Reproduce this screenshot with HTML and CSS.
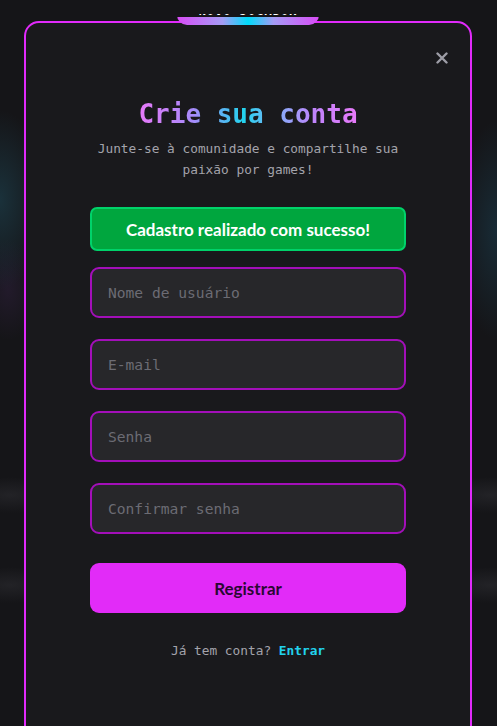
FILE: index.html
```html
<!DOCTYPE html>
<html lang="pt-BR">
<head>
<meta charset="utf-8">
<title>Crie sua conta</title>
<link rel="stylesheet" href="styles.css">
</head>
<body>
  <div class="backdrop">
    <section class="modal">
      <div class="badge"><span>NOVO JOGADOR</span></div>
      <button class="close" type="button" aria-label="Fechar">
        <svg viewBox="0 0 12 12" width="12" height="12"><path d="M1.5 1.5 L10.5 10.5 M10.5 1.5 L1.5 10.5" stroke="#9d9da6" stroke-width="2.4" stroke-linecap="round"/></svg>
      </button>
      <h1 class="title">Crie sua conta</h1>
      <p class="subtitle">Junte-se à comunidade e compartilhe sua paixão por games!</p>
      <form class="form">
        <div class="alert">Cadastro realizado com sucesso!</div>
        <div class="fields">
          <input class="field" type="text" placeholder="Nome de usuário">
          <input class="field" type="email" placeholder="E-mail">
          <input class="field" type="password" placeholder="Senha">
          <input class="field" type="password" placeholder="Confirmar senha">
        </div>
        <button class="submit" type="button">Registrar</button>
      </form>
      <p class="footer">Já tem conta? <a class="link" href="#">Entrar</a></p>
    </section>
  </div>
</body>
</html>
```
FILE: styles.css
```css
* { box-sizing: border-box; }

html, body {
  margin: 0;
  padding: 0;
  height: 726px;
  overflow: hidden;
}

body {
  background: #161619;
  font-family: "DejaVu Sans Mono", monospace;
}

.backdrop {
  height: 726px;
  padding: 21px 25px 0 24px;
  background:
    radial-gradient(ellipse 45px 90px at 0px 200px, rgba(35, 95, 115, 0.38), transparent),
    radial-gradient(ellipse 30px 50px at 8px 290px, rgba(80, 45, 110, 0.22), transparent),
    radial-gradient(ellipse 40px 110px at 497px 230px, rgba(30, 85, 110, 0.35), transparent),
    radial-gradient(ellipse 50px 18px at 10px 495px, rgba(60, 60, 66, 0.35), transparent),
    radial-gradient(ellipse 50px 18px at 490px 495px, rgba(60, 60, 66, 0.35), transparent),
    radial-gradient(ellipse 50px 18px at 10px 585px, rgba(60, 60, 66, 0.35), transparent),
    radial-gradient(ellipse 50px 18px at 490px 585px, rgba(60, 60, 66, 0.35), transparent),
    #151518;
}

.modal {
  position: relative;
  width: 448px;
  height: 760px;
  background: #19191c;
  border: 2px solid #e12afb;
  border-radius: 15px;
  padding: 76px 64px 0 64px;
  text-align: center;
}

.badge {
  position: absolute;
  top: -9px;
  left: 151px;
  width: 142px;
  height: 11px;
  overflow: hidden;
  border-radius: 0 0 10px 10px;
  background: linear-gradient(90deg, #d84cf6 0%, #a59cf5 32%, #00dcfb 50%, #a59cf5 68%, #d84cf6 100%) bottom / 100% 8.5px no-repeat;
  display: flex;
  justify-content: center;
}

.badge span {
  color: #ffffff;
  font-family: "DejaVu Sans Mono", monospace;
  font-weight: 700;
  font-size: 12px;
  line-height: 12px;
  letter-spacing: 1px;
  margin-top: -9px;
}

.close {
  position: absolute;
  top: 29px;
  right: 22px;
  width: 12px;
  height: 12px;
  padding: 0;
  border: 0;
  background: none;
  display: flex;
}

.title {
  margin: 0;
  font-family: "DejaVu Sans Mono", monospace;
  font-weight: 700;
  font-size: 26px;
  line-height: 30px;
  background: linear-gradient(90deg, #e879f9 0%, #a78bfa 25%, #22d3ee 48%, #7fb2f8 62%, #c084fc 80%, #e879f9 100%);
  -webkit-background-clip: text;
  background-clip: text;
  color: transparent;
  display: inline-block;
}

.subtitle {
  margin: 9px 0 0;
  font-size: 12.8px;
  line-height: 21px;
  color: #a3a3ab;
  padding: 0 4px;
}

.form {
  margin-top: 27px;
  display: flex;
  flex-direction: column;
}

.alert {
  height: 44px;
  border: 2px solid #00d26a;
  background: #00a63e;
  border-radius: 7px;
  color: #ffffff;
  font-family: Lato, "Open Sans", sans-serif;
  font-weight: 700;
  font-size: 17px;
  display: flex;
  align-items: center;
  justify-content: center;
  margin-bottom: 16px;
}

.fields {
  display: flex;
  flex-direction: column;
  gap: 21px;
}

.field {
  height: 51px;
  width: 100%;
  border: 2px solid #a30fb9;
  background: #27272a;
  border-radius: 9px;
  padding: 0 16px;
  font-family: "DejaVu Sans Mono", monospace;
  font-size: 14.6px;
  color: #e4e4e7;
  outline: none;
}

.field::placeholder {
  color: #6c6c74;
}

.submit {
  margin-top: 29px;
  height: 50px;
  border: 0;
  border-radius: 9px;
  background: #e22bf8;
  color: #2a0833;
  font-family: Lato, "Open Sans", sans-serif;
  font-weight: 700;
  font-size: 17px;
}

.footer {
  margin: 27px 0 0;
  font-size: 12.8px;
  line-height: 21px;
  color: #a3a3ab;
}

.link {
  color: #22d3ee;
  font-weight: 700;
  text-decoration: none;
}
```
